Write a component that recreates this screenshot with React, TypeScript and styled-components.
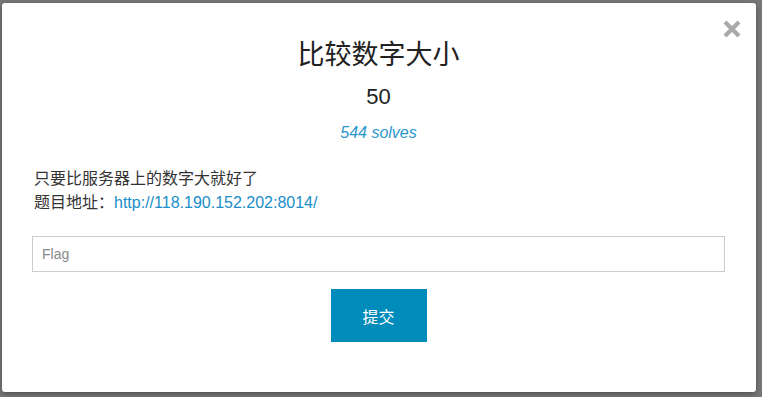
import React from 'react'
import styled, { createGlobalStyle } from 'styled-components'

const GlobalStyle = createGlobalStyle`
  html, body {
    margin: 0;
    padding: 0;
    width: 762px;
    height: 397px;
    overflow: hidden;
    background: #787878;
    font-family: "Liberation Sans", "Noto Sans CJK SC", sans-serif;
  }
`

const Backdrop = styled.div`
  width: 762px;
  height: 397px;
  padding: 3px 6px 5px 2px;
  box-sizing: border-box;
  display: flex;
`

const Modal = styled.div`
  position: relative;
  flex: 1;
  background: #fff;
  border-radius: 3px;
  box-shadow: 0 2px 6px rgba(0, 0, 0, 0.35);
  padding: 37px 31px 0 30px;
  display: flex;
  flex-direction: column;
`

const CloseButton = styled.button`
  position: absolute;
  top: 13px;
  right: 12px;
  border: none;
  background: none;
  padding: 0;
  width: 24px;
  height: 26px;
  display: flex;
  align-items: center;
  justify-content: center;
  cursor: pointer;
`

const Header = styled.div`
  display: flex;
  flex-direction: column;
  align-items: center;
`

const Title = styled.h3`
  margin: 0;
  font-size: 27px;
  line-height: 30px;
  font-weight: 400;
  color: #222;
`

const Points = styled.h4`
  margin: 12px 0 0;
  font-size: 22px;
  line-height: 30px;
  font-weight: 400;
  color: #222;
`

const Solves = styled.span`
  margin-top: 11px;
  font-size: 16px;
  line-height: 20px;
  font-style: italic;
  color: #2b97cc;
`

const Description = styled.p`
  margin: 24px 0 0 2px;
  font-size: 16px;
  line-height: 24px;
  color: #333;
`

const Link = styled.a`
  color: #1a8ec8;
  text-decoration: none;
`

const FlagInput = styled.input`
  margin-top: 21px;
  height: 36px;
  box-sizing: border-box;
  border: 1px solid #cccccc;
  padding: 0 9px;
  font-size: 14px;
  font-family: inherit;
  color: #555;
  outline: none;
  &::placeholder {
    color: #888;
  }
`

const SubmitRow = styled.div`
  display: flex;
  justify-content: center;
  margin-top: 17px;
`

const SubmitButton = styled.button`
  width: 96px;
  height: 53px;
  border: none;
  background: #008cba;
  color: #fff;
  font-size: 16px;
  font-family: inherit;
  cursor: pointer;
`

export default function App() {
  return (
    <>
      <GlobalStyle />
      <Backdrop>
        <Modal>
          <CloseButton aria-label="close">
            <svg width="20" height="20" viewBox="0 0 20 20">
              <path d="M3 3 L17 17 M17 3 L3 17" stroke="#a9a9a9" strokeWidth="4.2" strokeLinecap="butt" />
            </svg>
          </CloseButton>
          <Header>
            <Title>比较数字大小</Title>
            <Points>50</Points>
            <Solves>544 solves</Solves>
          </Header>
          <Description>
            只要比服务器上的数字大就好了
            <br />
            题目地址：<Link href="#">http://118.190.152.202:8014/</Link>
          </Description>
          <FlagInput placeholder="Flag" />
          <SubmitRow>
            <SubmitButton>提交</SubmitButton>
          </SubmitRow>
        </Modal>
      </Backdrop>
    </>
  )
}
